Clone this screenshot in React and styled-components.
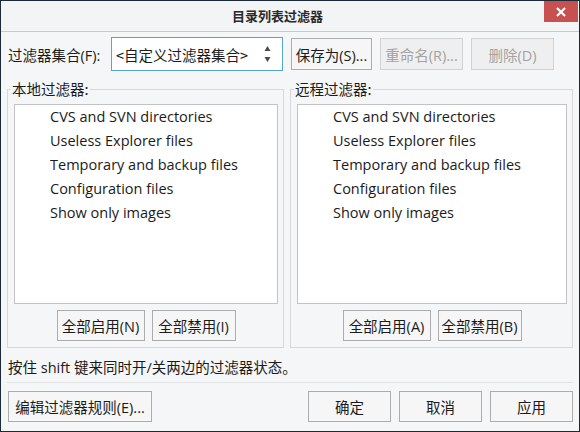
import React from 'react';
import styled, { createGlobalStyle } from 'styled-components';

const filters = [
  'CVS and SVN directories',
  'Useless Explorer files',
  'Temporary and backup files',
  'Configuration files',
  'Show only images',
];

const GlobalStyle = createGlobalStyle`
  html, body {
    margin: 0;
    padding: 0;
    background: #f5f6f7;
  }
  body {
    font-family: "Open Sans", "Noto Sans CJK SC", sans-serif;
    font-size: 14.5px;
    color: #1b1b1b;
  }
`;

const App = () => {
  return (
    <>
      <GlobalStyle />
      <Window>
        <TitleBar>
          <Title>目录列表过滤器</Title>
          <CloseButton>
            <svg width='10' height='10' viewBox='0 0 10 10'>
              <path d='M1 1 L9 9 M9 1 L1 9' stroke='#fff' strokeWidth='2.2' />
            </svg>
          </CloseButton>
        </TitleBar>

        <Body>
          <TopRow>
            <Label>过滤器集合(F):</Label>
            <Select>
              <span>&lt;自定义过滤器集合&gt;</span>
              <svg width='7' height='16' viewBox='0 0 7 16'>
                <path d='M3.5 0 L6.5 5 L0.5 5 Z' fill='#4a4a4a' />
                <path d='M3.5 16 L6.5 11 L0.5 11 Z' fill='#4a4a4a' />
              </svg>
            </Select>
            <Button $w={81} $h={32}>保存为(S)...</Button>
            <Button $w={83} $h={32} disabled>
              重命名(R)...
            </Button>
            <Button $w={83} $h={32} disabled>
              删除(D)
            </Button>
          </TopRow>

          <Groups>
            <FilterGroup title='本地过滤器:' enable='全部启用(N)' disable='全部禁用(I)' />
            <FilterGroup title='远程过滤器:' enable='全部启用(A)' disable='全部禁用(B)' />
          </Groups>

          <Hint>按住 shift 键来同时开/关两边的过滤器状态。</Hint>
          <Separator />

          <BottomRow>
            <Button $w={144} $h={31}>编辑过滤器规则(E)...</Button>
            <Spacer />
            <Button $w={83} $h={31}>确定</Button>
            <Button $w={83} $h={31}>取消</Button>
            <Button $w={83} $h={31}>应用</Button>
          </BottomRow>
        </Body>
      </Window>
    </>
  );
};

const FilterGroup = ({ title, enable, disable }) => (
  <Group>
    <Legend>{title}</Legend>
    <List>
      {filters.map((f) => (
        <Item key={f}>{f}</Item>
      ))}
    </List>
    <GroupButtons>
      <Button $w={88} $h={31}>{enable}</Button>
      <Button $w={84} $h={31}>{disable}</Button>
    </GroupButtons>
  </Group>
);

const Window = styled.div`
  width: 580px;
  height: 432px;
  box-sizing: border-box;
  border: 1px solid #1c2a37;
  background: #f5f6f7;
  display: flex;
  flex-direction: column;
`;

const TitleBar = styled.div`
  height: 30px;
  border-bottom: 1px solid #c9cacb;
  display: flex;
  align-items: flex-start;
  background: #f3f4f6;
`;

const Title = styled.div`
  flex: 1;
  height: 30px;
  line-height: 30px;
  text-align: center;
  padding-left: 10px;
  font-family: "Noto Sans CJK SC", sans-serif;
  font-weight: bold;
  font-size: 13px;
  color: #2a2a2a;
`;

const CloseButton = styled.div`
  width: 34px;
  height: 21px;
  margin-right: 1px;
  background: #c75050;
  display: flex;
  align-items: center;
  justify-content: center;
`;

const Body = styled.div`
  flex: 1;
  display: flex;
  flex-direction: column;
  padding: 0 6px;
`;

const TopRow = styled.div`
  display: flex;
  align-items: center;
  gap: 8px;
  margin-top: 5px;
  height: 34px;
`;

const Label = styled.span`
  padding-left: 1px;
  width: 95px;
  white-space: nowrap;
`;

const Select = styled.div`
  width: 172px;
  height: 34px;
  box-sizing: border-box;
  border: 1px solid #58a3d6;
  background: #fff;
  display: flex;
  align-items: center;
  justify-content: space-between;
  padding: 0 11px 0 4px;
  white-space: nowrap;
  font-family: "Noto Sans CJK SC", sans-serif;
`;

const Button = styled.button`
  width: ${(p) => p.$w}px;
  height: ${(p) => p.$h}px;
  box-sizing: border-box;
  padding: 0;
  margin: 0;
  font: inherit;
  white-space: nowrap;
  color: #1b1b1b;
  background: #f6f6f6;
  border: 1px solid #acacac;
  border-radius: 0;
  &:disabled {
    color: #a3a3a3;
    background: #efefef;
    border-color: #d2d2d2;
  }
`;

const Groups = styled.div`
  display: grid;
  grid-template-columns: minmax(0, 277px) minmax(0, 1fr);
  gap: 6px;
  margin-top: 8px;
`;

const Group = styled.fieldset`
  margin: 0;
  min-width: 0;
  box-sizing: border-box;
  border: 1px solid #d8d8d8;
  padding: 0 5px 6px 6px;
`;

const Legend = styled.legend`
  margin-left: -3px;
  padding: 0 1px;
  line-height: 20px;
  font-family: "Noto Sans CJK SC", sans-serif;
`;

const List = styled.div`
  margin-top: 5px;
  height: 200px;
  box-sizing: border-box;
  border: 1px solid #c3c3c3;
  background: #fff;
  padding-left: 35px;
`;

const Item = styled.div`
  height: 24px;
  line-height: 24px;
  white-space: nowrap;
`;

const GroupButtons = styled.div`
  display: flex;
  justify-content: center;
  gap: 7px;
  margin-top: 6px;
`;

const Hint = styled.div`
  margin-top: 10px;
  padding-left: 1px;
  line-height: 20px;
`;

const Separator = styled.div`
  margin-top: 4px;
  height: 1px;
  background: #e2e3e4;
`;

const BottomRow = styled.div`
  display: flex;
  gap: 8px;
  margin-top: 8px;
  padding-left: 1px;
`;

const Spacer = styled.div`
  flex: 1;
`;

export default App;
